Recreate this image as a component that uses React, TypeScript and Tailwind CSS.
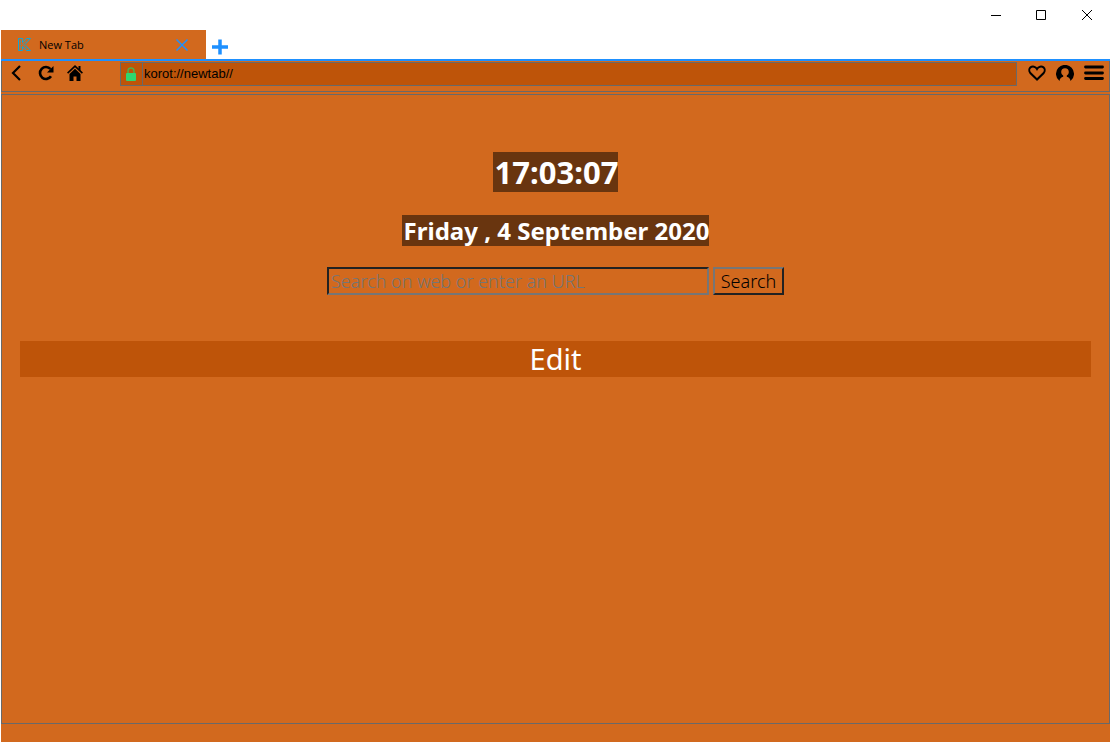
import React, { useState } from "react";

function KorotLogo() {
  return (
    <svg width="14" height="14" viewBox="0 0 14 14" fill="none" stroke="#12a5d4" strokeWidth="1" aria-hidden="true">
      <path d="M1.500.5h4v4l4-4h4L8 6.500l5.500 6H9.500l-4-4v4h-4z" />
      <path d="M3.500 2.500v8M5.500 6.500l5-4.500M6.500 7l4 4" strokeWidth=".8" strokeDasharray="2 1" />
    </svg>
  );
}

function BackIcon() {
  return (
    <svg width="10" height="16" viewBox="0 0 10 16" fill="none" stroke="#000" strokeWidth="2.200" aria-hidden="true">
      <path d="M9 1 2 8l7 7" />
    </svg>
  );
}

function ReloadIcon() {
  return (
    <svg width="16" height="16" viewBox="0 0 16 16" fill="none" aria-hidden="true">
      <path d="M12.500 4A6 6 0 1 0 13 11.300" stroke="#000" strokeWidth="2.600" />
      <path d="M15.500 1v6.500H9z" fill="#000" />
    </svg>
  );
}

function HomeIcon() {
  return (
    <svg width="16" height="16" viewBox="0 0 16 16" aria-hidden="true">
      <path d="M11.500 1h2v5l-2-2z" />
      <path d="M.6 8.200 8 1.200l7.400 7" fill="none" stroke="#000" strokeWidth="1.600" />
      <path d="M8 3.800 2.500 9V16h4v-4.500h3V16h4V9z" />
    </svg>
  );
}

function LockIcon() {
  return (
    <svg width="10" height="14" viewBox="0 0 10 14" aria-hidden="true">
      <path d="M2 7V4a3 3 0 0 1 6 0v3" fill="none" stroke="#4fae49" strokeWidth="1.500" />
      <rect y="6" width="10" height="8" rx="1" fill="#2fd66f" />
    </svg>
  );
}

function HeartIcon() {
  return (
    <svg width="18" height="16" viewBox="0 0 18 16" fill="none" stroke="#000" strokeWidth="2" aria-hidden="true">
      <path d="M9 14.500 2.300 8C.8 6 1 3.600 2.500 2.400 4.500 1 7.500 1.400 9 4 10.500 1.400 13.500 1 15.500 2.400 17 3.600 17.200 6 15.700 8z" />
    </svg>
  );
}

function ProfileIcon() {
  return (
    <svg width="18" height="16" viewBox="0 0 18 16" aria-hidden="true">
      <path d="M3.500 16A9 9 0 1 1 14.500 16C14.200 13.500 13 12.500 10.800 11.800V10.500C12.200 9.500 12.800 8.500 12.800 7A3.800 3.800 0 0 0 5.200 7C5.200 8.500 5.800 9.500 7.200 10.500V11.800C5 12.500 3.800 13.500 3.500 16z" />
    </svg>
  );
}

function MenuIcon() {
  return (
    <svg width="20" height="16" viewBox="0 0 20 16" stroke="#000" strokeWidth="2.800" strokeLinecap="round" aria-hidden="true">
      <path d="M1.500 2h17M1.500 8h17M1.500 13.500h17" />
    </svg>
  );
}

function TitleBar() {
  return (
    <div className="flex h-[30px] justify-end">
      <button aria-label="Minimize" className="flex w-[45px] items-center justify-center">
        <svg width="10" height="10" stroke="#000" aria-hidden="true"><path d="M0 5.500h10" /></svg>
      </button>
      <button aria-label="Maximize" className="flex w-[46px] items-center justify-center">
        <svg width="10" height="10" fill="none" stroke="#000" aria-hidden="true"><path d="M.5.5h9v9h-9z" /></svg>
      </button>
      <button aria-label="Close" className="flex w-[46px] items-center justify-center">
        <svg width="10" height="10" stroke="#000" aria-hidden="true"><path d="m0 0 10 10M10 0 0 10" /></svg>
      </button>
    </div>
  );
}

function TabStrip() {
  return (
    <div className="flex h-[29px]">
      <div className="flex w-[205px] items-center bg-[#d2691e] pt-px pl-4 pr-[18px]">
        <KorotLogo />
        <span className="ml-2 flex-1 text-[11px]">New Tab</span>
        <button aria-label="Close tab">
          <svg width="12" height="12" fill="none" stroke="#1e90ff" strokeWidth="1.500" aria-hidden="true"><path d="m.5.5 11 11M11.500.5l-11 11" /></svg>
        </button>
      </div>
      <button aria-label="New tab" className="flex w-7 items-center justify-center pt-1">
        <svg width="16" height="16" stroke="#1e90ff" strokeWidth="3.500" aria-hidden="true"><path d="M0 8h16M8 .5v15" /></svg>
      </button>
    </div>
  );
}

function Toolbar() {
  const [address, setAddress] = useState("korot://newtab//");
  return (
    <div className="flex h-[31px] items-start border-x border-b border-[#696969] bg-[#d2691e] pl-[9px] pr-[5px] pt-px">
      <button aria-label="Back" className="mt-[3px] w-[27px]"><BackIcon /></button>
      <button aria-label="Reload" className="mt-[3px] w-[29px]"><ReloadIcon /></button>
      <button aria-label="Home" className="mt-[3px] w-[53px]"><HomeIcon /></button>
      <div className="flex h-6 flex-1 border border-[#696969] bg-[#be5409]">
        <span className="flex w-[22px] items-center border-r border-[#696969] pl-[5px]"><LockIcon /></span>
        <input
          aria-label="Address"
          value={address}
          onChange={(e) => setAddress(e.target.value)}
          className="min-w-0 flex-1 bg-transparent pl-px font-['Liberation_Sans',sans-serif] text-[13px] outline-none"
        />
      </div>
      <div className="ml-[11px] mt-[3px] flex gap-2.5">
        <button aria-label="Favorites"><HeartIcon /></button>
        <button aria-label="Profile"><ProfileIcon /></button>
        <button aria-label="Menu"><MenuIcon /></button>
      </div>
    </div>
  );
}

function NewTabPage() {
  return (
    <main className="mt-0.5 flex flex-1 flex-col items-center border border-[#696969] bg-[#d2691e] px-[18px] pt-[57px] font-['Noto_Sans',sans-serif]">
      <h1 className="bg-[#69350f] pt-px pl-0.5 text-[31px] leading-[39px] font-bold text-white">17:03:07</h1>
      <h2 className="mt-[23px] bg-[#69350f] pl-0.5 text-2xl leading-[31px] font-bold text-white">Friday , 4 September 2020</h2>
      <form className="mt-[21px] flex h-7 gap-1 text-lg font-light" onSubmit={(e) => e.preventDefault()}>
        <input
          aria-label="Search"
          placeholder="Search on web or enter an URL"
          className="w-[382px] border-2 border-t-[#222] border-r-[#767676] border-b-[#767676] border-l-[#222] bg-transparent px-0.5 outline-none placeholder:text-[#757575]"
        />
        <button type="submit" className="w-[71px] border-2 border-t-[#767676] border-r-[#222] border-b-[#222] border-l-[#767676] leading-6">Search</button>
      </form>
      <button className="mt-[46px] w-full bg-[#be5409] text-[29px] leading-9 text-white">Edit</button>
    </main>
  );
}

export default function App() {
  return (
    <div className="flex min-h-screen flex-col bg-white px-px pb-px font-['Open_Sans','Noto_Sans',sans-serif] text-black">
      <TitleBar />
      <TabStrip />
      <div className="h-0.5 bg-[#1e90ff]" />
      <div className="flex flex-1 flex-col bg-[#d2691e] pb-[18px]">
        <Toolbar />
        <NewTabPage />
      </div>
    </div>
  );
}
